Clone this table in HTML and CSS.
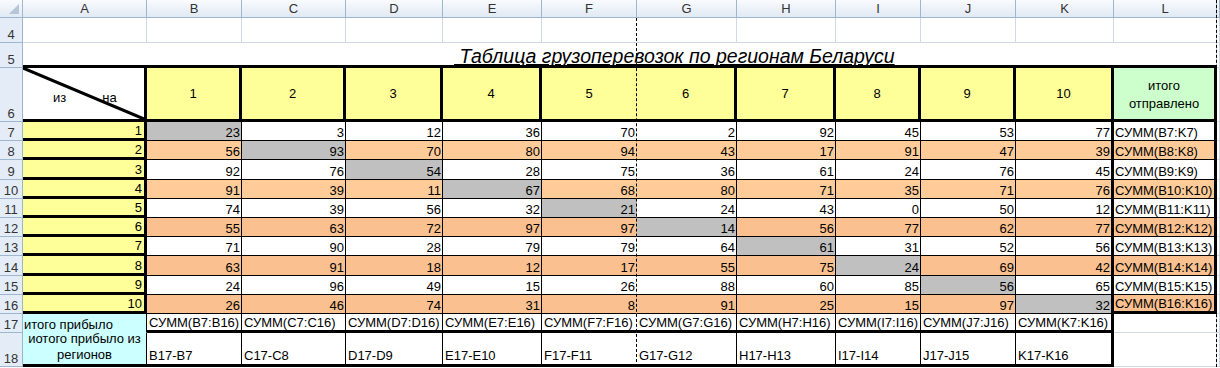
FILE: index.html
```html
<!DOCTYPE html>
<html lang="ru">
  <head>
    <meta charset="UTF-8" />
    <meta name="viewport" content="width=device-width, initial-scale=1.0" />
    <title>Грузоперевозки по регионам</title>
    <link rel="stylesheet" href="styles.css">
  </head>
  <body>
    <div id="sheet" class="sheet">
      <!-- column letters -->
      <div class="hd corner"></div>
      <div class="hd">A</div>
      <div class="hd">B</div>
      <div class="hd">C</div>
      <div class="hd">D</div>
      <div class="hd">E</div>
      <div class="hd">F</div>
      <div class="hd">G</div>
      <div class="hd">H</div>
      <div class="hd">I</div>
      <div class="hd">J</div>
      <div class="hd">K</div>
      <div class="hd">L</div>
      <div class="hd"></div>

      <!-- row 4: empty -->
      <div class="rh">4</div>
      <div></div><div></div><div></div><div></div><div></div>
      <div class="brk"></div>
      <div></div><div></div><div></div><div></div><div></div><div></div>
      <div></div>

      <!-- row 5: title -->
      <div class="rh">5</div>
      <div class="title"><span>&nbsp;Таблица грузоперевозок по регионам Беларуси</span></div>
      <div></div>

      <!-- row 6: table head -->
      <div class="rh">6</div>
      <div class="axis">
        <svg class="slash" viewBox="0 0 121 51" preserveAspectRatio="none">
          <line x1="0" y1="0" x2="121" y2="51" stroke="#000" stroke-width="3" />
        </svg>
        <span>из</span><span class="to">на</span>
      </div>
      <div class="top">1</div>
      <div class="top">2</div>
      <div class="top">3</div>
      <div class="top">4</div>
      <div class="top brk">5</div>
      <div class="top">6</div>
      <div class="top">7</div>
      <div class="top">8</div>
      <div class="top">9</div>
      <div class="top">10</div>
      <div class="sent">итого<br />отправлено</div>
      <div></div>

      <!-- page break markers -->
      <span class="pagebreak pb-f"></span>
      <span class="pagebreak pb-l"></span>
    </div>

    <script>
      var sheet = document.getElementById("sheet");
      var letters = ["B", "C", "D", "E", "F", "G", "H", "I", "J", "K"];

      // shipments: row = from region, column = to region
      var data = [
        [23, 3, 12, 36, 70, 2, 92, 45, 53, 77],
        [56, 93, 70, 80, 94, 43, 17, 91, 47, 39],
        [92, 76, 54, 28, 75, 36, 61, 24, 76, 45],
        [91, 39, 11, 67, 68, 80, 71, 35, 71, 76],
        [74, 39, 56, 32, 21, 24, 43, 0, 50, 12],
        [55, 63, 72, 97, 97, 14, 56, 77, 62, 77],
        [71, 90, 28, 79, 79, 64, 61, 31, 52, 56],
        [63, 91, 18, 12, 17, 55, 75, 24, 69, 42],
        [24, 96, 49, 15, 26, 88, 60, 85, 56, 65],
        [26, 46, 74, 31, 8, 91, 25, 15, 97, 32]
      ];

      // Function to add one cell to the sheet grid
      function cell(cls, text) {
        var d = document.createElement("div");
        d.className = cls;
        if (text !== undefined) d.textContent = text;
        sheet.appendChild(d);
        return d;
      }

      // Function to pick the row fill
      function shade(r) {
        if (r % 2 === 1) return "white";
        return r < 12 ? "peach" : "peach2";
      }

      data.forEach(function (row, i) {
        var r = i + 7;
        var fill = shade(r);
        cell("rh", r);
        cell("from", i + 1);
        row.forEach(function (v, j) {
          var cls = "num " + (i === j ? "diag" : fill);
          if (j === 4) cls += " brk";
          if (j === 9) cls += " last";
          cell(cls, v);
        });
        cell("total " + fill + (r === 16 ? " end" : ""), "СУММ(B" + r + ":K" + r + ")");
        cell("");
      });

      // row 17: received totals
      cell("rh", 17);
      cell("recv", "итого прибыло");
      letters.forEach(function (c, j) {
        var cls = "sum";
        if (j === 4) cls += " brk";
        if (j === 9) cls += " last";
        cell(cls, "СУММ(" + c + "7:" + c + "16)");
      });
      cell("");
      cell("");

      // row 18: received from other regions
      cell("rh", 18);
      cell("recv-all", "иотого прибыло из регионов");
      letters.forEach(function (c, j) {
        var cls = "diff";
        if (j === 4) cls += " brk";
        if (j === 9) cls += " last";
        cell(cls, c + "17-" + c + (j + 7));
      });
      cell("");
      cell("");
    </script>
  </body>
</html>
```

FILE: styles.css
```css
body {
  margin: 0;
  font-family: "Liberation Sans", Arial, sans-serif;
  font-size: 13px;
  color: #000000;
  background-color: #ffffff;
}
.sheet {
  position: relative;
  display: grid;
  width: 1220px;
  grid-template-columns: 23px 124px 95px 104px 97px 99px 95px 100px 99px 85px 95px 98px 103px 3px;
  grid-template-rows: 18px 25px 25px 54px repeat(10, 19.2px) 19px 34px;
}
.sheet > div {
  box-sizing: border-box;
  display: flex;
  align-items: flex-end;
  white-space: nowrap;
  line-height: 15px;
  border-right: 1px solid #d0d7e5;
  border-bottom: 1px solid #d0d7e5;
}

/* headers */
.sheet > .hd {
  justify-content: center;
  align-items: center;
  color: #333333;
  background: linear-gradient(#f9fbfe, #e1e9f4);
  border-color: #9eb6ce;
}
.sheet > .corner {
  position: relative;
}
.corner::after {
  content: "";
  position: absolute;
  right: 3px;
  bottom: 3px;
  border-left: 10px solid transparent;
  border-bottom: 10px solid #b6c5d8;
}
.sheet > .rh {
  justify-content: center;
  color: #333333;
  background-color: #e4ecf7;
  border-color: #9eb6ce;
}

/* title row */
.sheet > .title {
  grid-column: 2 / 14;
  padding-left: 431px;
  border-bottom: 3px solid #000000;
  font-size: 19.5px;
  font-style: italic;
  line-height: 18px;
}
.title span {
  text-decoration: underline;
  white-space: pre;
}

/* head of the table */
.sheet > .axis {
  position: relative;
  align-items: center;
  padding: 7px 0 0 30px;
  border-right: 3px solid #000000;
  border-bottom: 3px solid #000000;
}
.slash {
  position: absolute;
  top: 0;
  left: 0;
  width: 100%;
  height: 100%;
}
.axis .to {
  margin-left: 36px;
}
.sheet > .top {
  justify-content: center;
  align-items: center;
  background-color: #ffff99;
  border-right: 3px solid #000000;
  border-bottom: 3px solid #000000;
}
.sheet > .sent {
  justify-content: center;
  align-items: center;
  text-align: center;
  white-space: normal;
  line-height: 18px;
  padding-top: 2px;
  background-color: #ccffcc;
  border-right: 3px solid #000000;
  border-bottom: 3px solid #000000;
}

/* body */
.sheet > .from {
  justify-content: flex-end;
  padding-right: 2px;
  background-color: #ffff99;
  border-right: 3px solid #000000;
  border-bottom: 3px solid #000000;
}
.sheet > .num {
  justify-content: flex-end;
  padding-right: 1px;
  border-color: #000000;
}
.sheet > .total {
  padding-left: 1px;
  border-right: 3px solid #000000;
  border-bottom: 1px solid #000000;
}
.white {
  background-color: #ffffff;
}
.peach {
  background-color: #ffcc99;
}
.peach2 {
  background-color: #fac090;
}
.diag {
  background-color: #c0c0c0;
}

/* totals */
.sheet > .recv {
  padding-left: 1px;
  background-color: #ccffff;
  border-right: 1px solid #000000;
  border-bottom: 1px solid #ccffff;
}
.sheet > .recv-all {
  justify-content: center;
  align-items: center;
  text-align: center;
  white-space: normal;
  line-height: 16px;
  padding: 0 1px 2px;
  background-color: #ccffff;
  border-right: 1px solid #000000;
  border-bottom: 3px solid #000000;
}
.sheet > .sum {
  padding-left: 2px;
  border-right: 1px solid #000000;
  border-bottom: 3px solid #000000;
}
.sheet > .diff {
  padding: 0 0 1px 2px;
  border-right: 1px solid #000000;
  border-bottom: 3px solid #000000;
}
.sheet > .last {
  border-right-width: 3px;
}
.sheet > .end {
  border-bottom-width: 3px;
}
.sheet > .brk {
  border-right: 1px solid transparent;
}

/* dashed page breaks */
.pagebreak {
  position: absolute;
  bottom: 0;
  border-left: 1px dashed #000000;
}
.pb-f {
  top: 18px;
  left: 636px;
}
.pb-l {
  top: 0;
  left: 1216px;
}
```
